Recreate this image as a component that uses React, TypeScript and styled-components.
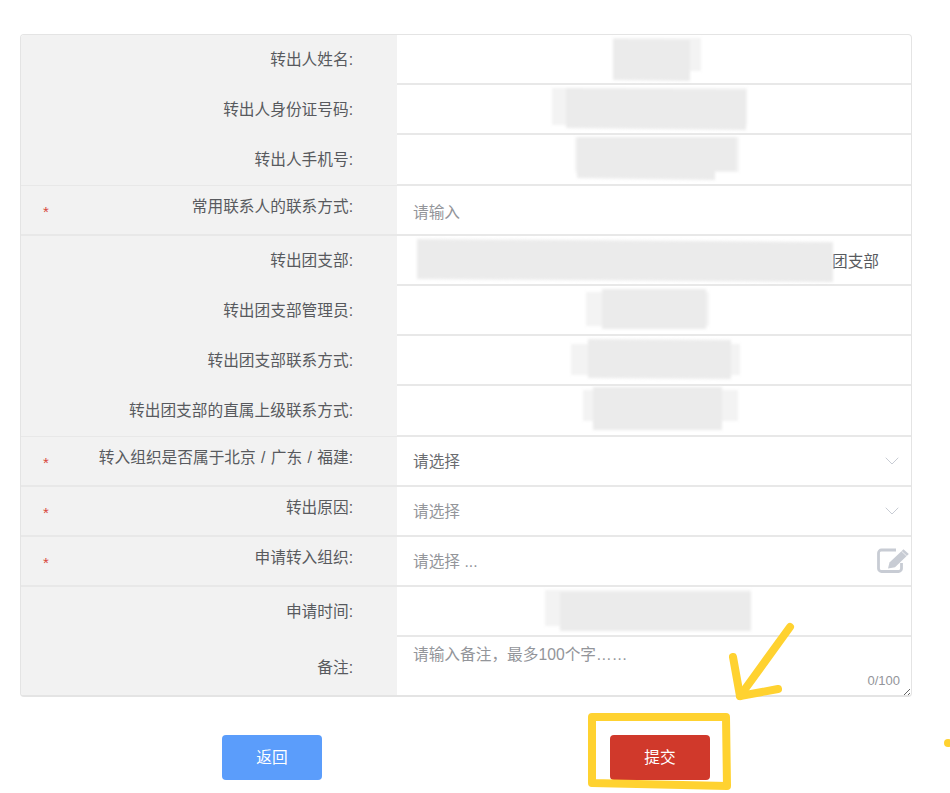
import React from "react";
import styled, { createGlobalStyle } from "styled-components";
import { ChevronDown } from "lucide-react";

type Smear = { x: number; y: number; w: number; h: number; light?: boolean; skew?: number };
type Field = {
  label: string;
  required?: boolean;
  kind?: "text" | "input" | "select" | "picker";
  placeholder?: string;
  value?: string;
  drop?: number;
  offset?: number;
  smears?: Smear[];
  suffix?: string;
};

const fields: Field[] = [
  {
    label: "转出人姓名:",
    offset: 216,
    smears: [
      { x: 0, y: 3, w: 88, h: 33, light: true },
      { x: 0, y: 4, w: 77, h: 41, skew: 1 },
    ],
  },
  {
    label: "转出人身份证号码:",
    offset: 155,
    smears: [
      { x: 0, y: 3, w: 195, h: 37, light: true },
      { x: 14, y: 3, w: 180, h: 40, skew: 2 },
    ],
  },
  {
    label: "转出人手机号:",
    offset: 178,
    smears: [
      { x: 0, y: 2, w: 164, h: 35, light: true },
      { x: 2, y: 3, w: 138, h: 40, skew: 2 },
      { x: 3, y: 2, w: 158, h: 34 },
    ],
  },
  { label: "常用联系人的联系方式:", required: true, kind: "input", placeholder: "请输入", drop: 6 },
  {
    label: "转出团支部:",
    offset: 19,
    smears: [{ x: 1, y: 3, w: 416, h: 40, skew: 3 }],
    suffix: "团支部",
  },
  {
    label: "转出团支部管理员:",
    offset: 189,
    smears: [
      { x: 0, y: 6, w: 123, h: 34, light: true },
      { x: 16, y: 3, w: 104, h: 40 },
    ],
  },
  {
    label: "转出团支部联系方式:",
    offset: 174,
    smears: [
      { x: 0, y: 8, w: 169, h: 31, light: true },
      { x: 17, y: 3, w: 143, h: 39, skew: 1 },
    ],
  },
  {
    label: "转出团支部的直属上级联系方式:",
    offset: 186,
    smears: [
      { x: 0, y: 4, w: 155, h: 31, light: true },
      { x: 10, y: 1, w: 129, h: 43 },
    ],
  },
  { label: "转入组织是否属于北京 / 广东 / 福建:", required: true, kind: "select", value: "请选择", drop: 0 },
  { label: "转出原因:", required: true, kind: "select", placeholder: "请选择" },
  { label: "申请转入组织:", required: true, kind: "picker", placeholder: "请选择 ..." },
  {
    label: "申请时间:",
    offset: 148,
    smears: [
      { x: 0, y: 3, w: 206, h: 36, light: true },
      { x: 15, y: 5, w: 191, h: 39 },
    ],
  },
];

const Redaction = ({ smears }: { smears: Smear[] }) => {
  const width = Math.max(...smears.map((s) => s.x + s.w));
  return (
    <RedactionArt width={width} height={50} viewBox={`0 0 ${width} 50`}>
      {smears.map((s) => {
        const drop = s.skew ?? 0;
        const points = `${s.x},${s.y} ${s.x + s.w},${s.y + drop} ${s.x + s.w},${s.y + s.h + drop} ${s.x},${s.y + s.h}`;
        return <polygon key={`${s.x}-${s.y}`} points={points} fill={s.light ? "#f3f3f3" : "#ebebeb"} />;
      })}
    </RedactionArt>
  );
};

const App = () => {
  return (
    <Page>
      <GlobalStyle />
      <Table>
        {fields.map((field) => (
          <Row key={field.label}>
            <LabelCell $lifted={field.required}>
              {field.required && <Star>*</Star>}
              {field.label}
            </LabelCell>
            <ValueCell $offset={field.offset ?? 0}>
              {field.smears && <Redaction smears={field.smears} />}
              {field.suffix && <Suffix>{field.suffix}</Suffix>}
              {field.kind === "input" && <TextInput placeholder={field.placeholder} $drop={field.drop} />}
              {field.kind === "select" && (
                <>
                  <TextInput placeholder={field.placeholder} value={field.value} $drop={field.drop} readOnly />
                  <SelectArrow size={24} strokeWidth={1} />
                </>
              )}
              {field.kind === "picker" && (
                <>
                  <TextInput placeholder={field.placeholder} readOnly />
                  <PickerIcon viewBox="0 0 32 25">
                    <path
                      d="M24.500 15v5.500a3 3 0 0 1-3 3H4.500a3 3 0 0 1-3-3V5a3 3 0 0 1 3-3H19"
                      fill="none"
                      stroke="#c8ccd4"
                      strokeWidth="2.800"
                    />
                    <path d="M11 20.500 12.500 14.500 26.500 1.200 31.800 6 18 19.200z" fill="#c8ccd4" />
                    <path d="M24.500 3.200 29.700 8" fill="none" stroke="#fff" strokeWidth="0.700" />
                  </PickerIcon>
                </>
              )}
            </ValueCell>
          </Row>
        ))}
        <NoteRow>
          <NoteLabel>备注:</NoteLabel>
          <NoteCell>
            <NoteArea placeholder="请输入备注，最多100个字……" />
            <Counter>0/100</Counter>
          </NoteCell>
        </NoteRow>
      </Table>
      <Actions>
        <BackButton type="button">返回</BackButton>
        <SubmitButton type="button">提交</SubmitButton>
      </Actions>
      <Annotation viewBox="0 0 950 793">
        <path d="M790 627 740 696" />
        <path d="M733 657 740 696 778 689" />
        <path d="M592 717H726L727 786 592 783Z" />
        <path d="M948 743h.1" />
      </Annotation>
    </Page>
  );
};
export default App;

const GlobalStyle = createGlobalStyle`
  html, body {
    margin: 0;
    background: #fff;
  }
  body {
    font-family: "Liberation Sans", "Noto Sans CJK SC", sans-serif;
  }
`;

const Page = styled.div`
  position: relative;
  width: 950px;
  height: 793px;
  overflow: hidden;
  padding: 34px 38px 0 20px;
  box-sizing: border-box;
`;
const Table = styled.div`
  width: 892px;
  border: 1px solid #e4e4e4;
  border-bottom-width: 2px;
  border-radius: 4px;
  overflow: hidden;
  box-sizing: border-box;
`;
const Row = styled.div`
  display: grid;
  grid-template-columns: 376px 1fr;
  height: 50.2px;
  border-bottom: 2px solid #e8e8e8;
  box-sizing: border-box;
`;
const NoteRow = styled(Row)`
  height: 58px;
  border-bottom: 0;
`;
const LabelCell = styled.div<{ $lifted?: boolean }>`
  position: relative;
  display: flex;
  align-items: center;
  justify-content: flex-end;
  padding: 0 44px ${(p) => (p.$lifted ? "8px" : "3px")} 0;
  background: #f2f2f2;
  color: #585a5e;
  font-size: 15.7px;
  word-spacing: 1px;
  white-space: nowrap;
`;
const NoteLabel = styled(LabelCell)`
  padding-bottom: 2px;
`;
const Star = styled.span`
  position: absolute;
  left: 22px;
  top: 18px;
  color: #d8473b;
  font-size: 15px;
  line-height: 16px;
`;
const ValueCell = styled.div<{ $offset: number }>`
  position: relative;
  display: flex;
  align-items: center;
  padding-left: ${(p) => p.$offset}px;
  min-width: 0;
`;
const RedactionArt = styled.svg`
  display: block;
  flex: none;
  filter: blur(1.4px);
`;
const Suffix = styled.span`
  margin-left: -1px;
  color: #585a5e;
  font-size: 15.7px;
  white-space: nowrap;
`;
const TextInput = styled.input<{ $drop?: number }>`
  flex: 1;
  min-width: 0;
  height: 100%;
  padding: ${(p) => p.$drop ?? 2}px 50px 0 16px;
  border: 0;
  outline: 0;
  background: transparent;
  font: inherit;
  font-size: 15.7px;
  color: #6a6c70;
  &::placeholder {
    color: #93959a;
    opacity: 1;
  }
`;
const SelectArrow = styled(ChevronDown)`
  position: absolute;
  right: 7px;
  top: 12px;
  color: #c8ccd4;
`;
const PickerIcon = styled.svg`
  position: absolute;
  right: 2px;
  top: 11px;
  width: 32px;
  height: 25px;
`;
const NoteCell = styled.div`
  position: relative;
  min-width: 0;
`;
const NoteArea = styled.textarea`
  display: block;
  width: 100%;
  height: 100%;
  padding: 6px 16px;
  border: 0;
  outline: 0;
  resize: vertical;
  box-sizing: border-box;
  font: inherit;
  font-size: 15.7px;
  line-height: 24px;
  color: #585a5e;
  background: #fff;
  &::placeholder {
    color: #93959a;
    opacity: 1;
  }
`;
const Counter = styled.span`
  position: absolute;
  right: 11px;
  bottom: 8px;
  color: #93959a;
  font-size: 13px;
  line-height: 16px;
`;
const Actions = styled.div`
  display: flex;
  gap: 288px;
  padding: 38px 0 0 202px;
`;
const Button = styled.button`
  width: 100px;
  height: 45px;
  padding: 0 0 2px;
  border: 0;
  border-radius: 4px;
  color: #fff;
  font: inherit;
  font-size: 15.7px;
`;
const BackButton = styled(Button)`
  background: #5b9dfb;
`;
const SubmitButton = styled(Button)`
  background: #d0392b;
`;
const Annotation = styled.svg`
  position: absolute;
  inset: 0;
  width: 950px;
  height: 793px;
  pointer-events: none;
  fill: none;
  stroke: #ffd230;
  stroke-width: 8px;
  stroke-linecap: round;
  stroke-linejoin: round;
`;
